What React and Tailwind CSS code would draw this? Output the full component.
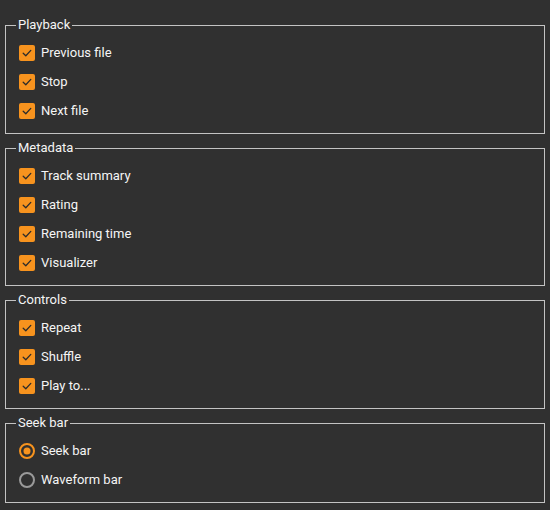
import React from "react";

function Check() {
  return (
    <span className="flex h-[16px] w-[16px] shrink-0 items-center justify-center rounded-[2px] bg-[#f7931e]">
      <svg width="12" height="12" viewBox="0 0 12 12" fill="none">
        <path d="M2.2 6.2 L4.8 8.7 L9.8 3.4" stroke="#2b2b2b" strokeWidth="1.3" strokeLinecap="round" strokeLinejoin="round" />
      </svg>
    </span>
  );
}

function Radio({ on }) {
  return (
    <svg width="16" height="16" viewBox="0 0 16 16" className="shrink-0">
      <circle cx="8" cy="8" r="7" fill="none" stroke={on ? "#f7931e" : "#9a9a9a"} strokeWidth="2" />
      {on && <circle cx="8" cy="8" r="3.5" fill="#f7931e" />}
    </svg>
  );
}

function Row({ children, label }) {
  return (
    <div className="flex h-[29px] items-center gap-[6px]">
      {children}
      <span className="text-[13px] leading-none text-[#f5f5f5]">{label}</span>
    </div>
  );
}

function Group({ title, children }) {
  return (
    <fieldset className="mx-[5px] border border-[#c3c3c3] p-0">
      <legend className="ml-[10px] px-[2px] text-[13px] leading-[16px] text-[#f5f5f5]">{title}</legend>
      <div className="pb-[8px] pl-[13px] pt-[5px]">{children}</div>
    </fieldset>
  );
}

export default function App() {
  return (
    <div
      className="flex h-[510px] w-[550px] flex-col gap-[6px] bg-[#303030] pt-[17px]"
      style={{ fontFamily: "Roboto, 'Liberation Sans', sans-serif" }}
    >
      <Group title="Playback">
        <Row label="Previous file"><Check /></Row>
        <Row label="Stop"><Check /></Row>
        <Row label="Next file"><Check /></Row>
      </Group>
      <Group title="Metadata">
        <Row label="Track summary"><Check /></Row>
        <Row label="Rating"><Check /></Row>
        <Row label="Remaining time"><Check /></Row>
        <Row label="Visualizer"><Check /></Row>
      </Group>
      <Group title="Controls">
        <Row label="Repeat"><Check /></Row>
        <Row label="Shuffle"><Check /></Row>
        <Row label="Play to..."><Check /></Row>
      </Group>
      <Group title="Seek bar">
        <Row label="Seek bar"><Radio on /></Row>
        <Row label="Waveform bar"><Radio /></Row>
      </Group>
    </div>
  );
}
